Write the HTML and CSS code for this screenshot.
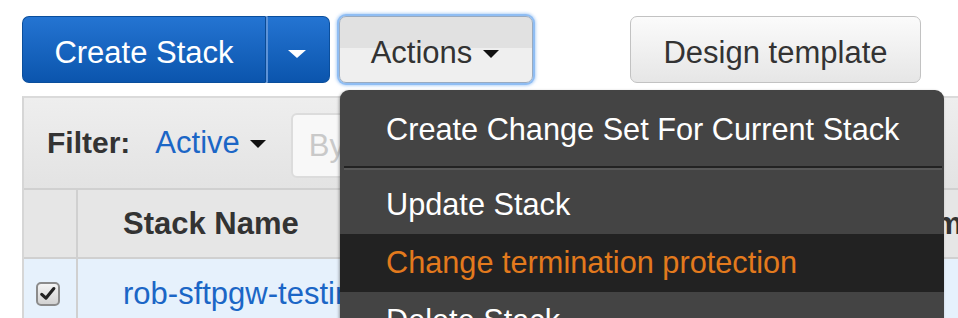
FILE: index.html
```html
<!DOCTYPE html>
<html>
<head>
<meta charset="utf-8">
<title>Stacks</title>
<link rel="stylesheet" href="styles.css">
</head>
<body>
<div class="page">
  <div class="toolbar">
    <div class="split">
      <button class="btn-primary main">Create Stack</button>
      <button class="btn-primary toggle"><span class="caret caret-white"></span></button>
    </div>
    <button class="btn actions">Actions<span class="caret"></span></button>
    <button class="btn design">Design template</button>
  </div>

  <div class="panel">
    <div class="filterbar">
      <span class="filter-label">Filter:</span>
      <span class="filter-value">Active<span class="caret"></span></span>
      <div class="search">By</div>
    </div>
    <div class="row header">
      <div class="cell c-check"></div>
      <div class="cell c-name">Stack Name</div>
      <div class="cell c-time">Created Time</div>
    </div>
    <div class="row data">
      <div class="cell c-check">
        <span class="checkbox">
          <svg viewBox="0 0 24 24" width="20" height="20"><path d="M4.5 12.5 L9.5 17 L19 5.5" fill="none" stroke="#222" stroke-width="3.8" stroke-linecap="round" stroke-linejoin="round"/></svg>
        </span>
      </div>
      <div class="cell c-name link">rob-sftpgw-testing</div>
      <div class="cell c-time">2018-03-14</div>
    </div>
  </div>

  <ul class="menu">
    <li class="item">Create Change Set For Current Stack</li>
    <li class="sep"></li>
    <li class="item">Update Stack</li>
    <li class="item active">Change termination protection</li>
    <li class="item">Delete Stack</li>
  </ul>
</div>
</body>
</html>
```

FILE: styles.css
```css
html, body {
  margin: 0;
  padding: 0;
  background: #ffffff;
}
.page {
  position: relative;
  width: 958px;
  height: 318px;
  overflow: hidden;
  font-family: "Liberation Sans", Arial, Helvetica, sans-serif;
  font-size: 31px;
  color: #333333;
}

/* Toolbar */
.toolbar {
  display: flex;
  align-items: flex-start;
  padding: 16px 0 0 22px;
  height: 67px;
}
button {
  font-family: inherit;
  font-size: 31px;
  margin: 0;
  cursor: pointer;
}
.split {
  display: flex;
  height: 67px;
  width: 308px;
}
.btn-primary {
  height: 67px;
  color: #ffffff;
  background: linear-gradient(#2474d2, #0b55ad);
  border: 1px solid #0a4e9c;
  display: flex;
  align-items: center;
  justify-content: center;
  padding: 7px 0 0 0;
}
.btn-primary.main {
  width: 244px;
  border-radius: 7px 0 0 7px;
  border-right: 1px solid #0a4a94;
}
.btn-primary.toggle {
  width: 64px;
  border-radius: 0 7px 7px 0;
  border-left: 2px solid #5d93d8;
  padding-right: 4px;
}
.caret {
  display: inline-block;
  width: 0;
  height: 0;
  border-left: 8px solid transparent;
  border-right: 8px solid transparent;
  border-top: 8px solid #111111;
  margin-top: 2px;
}
.caret-white {
  border-left-width: 9px;
  border-right-width: 9px;
  border-top-color: #ffffff;
}
.btn {
  height: 67px;
  border-radius: 7px;
  color: #333333;
  display: flex;
  align-items: center;
  justify-content: center;
  padding: 7px 0 0 0;
}
.actions {
  margin-left: 9px;
  width: 194px;
  border: 1px solid #98aac0;
  background: linear-gradient(#e1e1e1 0, #e1e1e1 48%, #efefef 48%, #efefef 100%);
  box-shadow: 0 0 0 2px #8fbdf3, 0 0 3px 3px rgba(120, 175, 240, 0.55);
  gap: 11px;
  padding-right: 2px;
}
.design {
  margin-left: 97px;
  width: 291px;
  border: 1px solid #c2c2c2;
  background: linear-gradient(#fbfbfb, #e6e6e6);
}

/* Panel / table */
.panel {
  margin: 13px 0 0 22px;
  width: 960px;
  border-top: 2px solid #dadada;
  border-left: 2px solid #d6d6d6;
}
.filterbar {
  height: 90px;
  display: flex;
  align-items: center;
  padding-left: 23px;
  background: linear-gradient(#eeeeee, #e3e3e3);
  border-bottom: 2px solid #d0d0d0;
}
.filter-label {
  font-weight: bold;
  font-size: 30px;
  color: #333333;
}
.filter-value {
  margin-left: 25px;
  color: #1b66c6;
  display: flex;
  align-items: center;
  gap: 10px;
}
.search {
  margin-left: 25px;
  margin-top: 5px;
  height: 61px;
  width: 500px;
  border: 2px solid #dcdcdc;
  border-radius: 6px;
  background: #f8f8f8;
  color: #c9c9c9;
  display: flex;
  align-items: center;
  padding-left: 16px;
}
.row {
  display: grid;
  grid-template-columns: 52px 682px 1fr;
}
.row.header {
  height: 67px;
  background: #e6e6e6;
  border-bottom: 2px solid #d0d0d0;
  font-weight: bold;
}
.row.data {
  height: 70px;
  background: #e6f1fc;
}
.cell {
  display: flex;
  align-items: center;
  white-space: nowrap;
}
.c-name {
  border-left: 2px solid #d0d0d0;
  padding-left: 45px;
}
.c-time {
  border-left: 2px solid #d0d0d0;
  padding-left: 24px;
}
.link {
  color: #1b66c6;
}
.c-check {
  padding-left: 12px;
}
.checkbox {
  width: 20px;
  height: 20px;
  border: 2px solid #8b8b8b;
  border-radius: 5px;
  background: linear-gradient(#f4f4f4, #d2d2d2);
  display: flex;
  align-items: center;
  justify-content: center;
}

/* Dropdown menu */
.menu {
  position: absolute;
  left: 340px;
  top: 90px;
  width: 604px;
  height: 280px;
  margin: 0;
  padding: 11px 0 0 0;
  list-style: none;
  background: #444444;
  border-radius: 9px;
  box-shadow: -1px 1px 3px rgba(0, 0, 0, 0.35);
  color: #ffffff;
  font-size: 30.7px;
}
.item {
  height: 58px;
  line-height: 58px;
  padding-left: 46px;
  white-space: nowrap;
}
.item.active {
  background: #222222;
  color: #e37a1d;
}
.sep {
  height: 2px;
  margin: 7px 2px 6px 4px;
  background: #222222;
  border-bottom: 2px solid #575757;
}
```
